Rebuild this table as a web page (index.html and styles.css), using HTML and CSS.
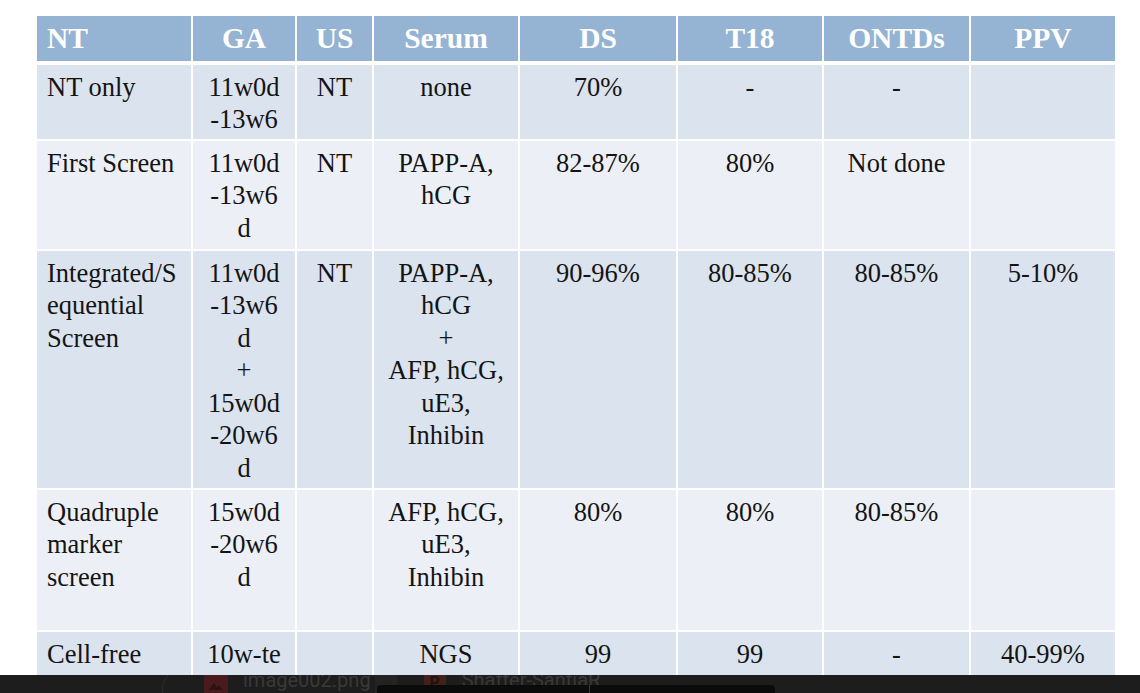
FILE: index.html
```html
<!DOCTYPE html>
<html lang="en">
<head>
<meta charset="utf-8">
<title>Prenatal screening comparison</title>
<link rel="stylesheet" href="styles.css">
</head>
<body>
<div class="page">
  <table class="screen-table">
    <colgroup>
      <col class="c1"><col class="c2"><col class="c3"><col class="c4">
      <col class="c5"><col class="c6"><col class="c7"><col class="c8">
    </colgroup>
    <thead>
      <tr class="head-row">
        <th class="left">NT</th>
        <th>GA</th>
        <th>US</th>
        <th>Serum</th>
        <th>DS</th>
        <th>T18</th>
        <th>ONTDs</th>
        <th>PPV</th>
      </tr>
    </thead>
    <tbody>
      <tr class="row odd r1">
        <td class="left">NT only</td>
        <td>11w0d<br>-13w6</td>
        <td>NT</td>
        <td>none</td>
        <td>70%</td>
        <td>-</td>
        <td>-</td>
        <td></td>
      </tr>
      <tr class="row even r2">
        <td class="left">First Screen</td>
        <td>11w0d<br>-13w6<br>d</td>
        <td>NT</td>
        <td>PAPP-A,<br>hCG</td>
        <td>82-87%</td>
        <td>80%</td>
        <td>Not done</td>
        <td></td>
      </tr>
      <tr class="row odd r3">
        <td class="left">Integrated/S<br>equential<br>Screen</td>
        <td>11w0d<br>-13w6<br>d<br>+<br>15w0d<br>-20w6<br>d</td>
        <td>NT</td>
        <td>PAPP-A,<br>hCG<br>+<br>AFP, hCG,<br>uE3,<br>Inhibin</td>
        <td>90-96%</td>
        <td>80-85%</td>
        <td>80-85%</td>
        <td>5-10%</td>
      </tr>
      <tr class="row even r4">
        <td class="left">Quadruple<br>marker<br>screen</td>
        <td>15w0d<br>-20w6<br>d</td>
        <td></td>
        <td>AFP, hCG,<br>uE3,<br>Inhibin</td>
        <td>80%</td>
        <td>80%</td>
        <td>80-85%</td>
        <td></td>
      </tr>
      <tr class="row odd r5">
        <td class="left">Cell-free</td>
        <td>10w-te</td>
        <td></td>
        <td>NGS</td>
        <td>99</td>
        <td>99</td>
        <td>-</td>
        <td>40-99%</td>
      </tr>
    </tbody>
  </table>
</div>

<div class="download-bar">
  <div class="chip-ring"></div>
  <div class="dl-item">
    <span class="file-icon img-icon">
      <svg width="24" height="18" viewBox="0 0 24 18"><rect x="0" y="0" width="24" height="18" fill="#4a1b1c"/><path d="M5 15 L10 8 L13 12 L15 10 L19 15 Z" fill="#2a1414"/></svg>
    </span>
    <span class="dl-name">image002.png</span>
    <span class="dl-sep"></span>
  </div>
  <div class="dl-item second">
    <span class="file-icon ppt-icon">P</span>
    <span class="dl-name">Shaffer-SantiaR...</span>
  </div>
  <div class="overlay-strip"></div>
  <div class="overlay-line"></div>
</div>
</body>
</html>
```

FILE: styles.css
```css
* {
  box-sizing: border-box;
}

html, body {
  margin: 0;
  padding: 0;
  background: #ffffff;
}

body {
  width: 1140px;
  height: 693px;
  overflow: hidden;
  position: relative;
  font-family: "Liberation Serif", "Times New Roman", serif;
}

.page {
  padding: 14px 0 0 35px;
}

.screen-table {
  table-layout: fixed;
  width: 1082px;
  border-collapse: separate;
  border-spacing: 2px;
  background: #ffffff;
  font-family: "Liberation Serif", "Times New Roman", serif;
}

.c1 { width: 154px; }
.c2 { width: 102px; }
.c3 { width: 75px; }
.c4 { width: 144px; }
.c5 { width: 156px; }
.c6 { width: 144px; }
.c7 { width: 145px; }
.c8 { width: 144px; }

.screen-table th,
.screen-table td {
  padding: 0 4px;
  text-align: center;
  vertical-align: top;
  white-space: nowrap;
  font-family: "Liberation Serif", "Times New Roman", serif;
}

.screen-table .left {
  text-align: left;
  padding-left: 10px;
}

.head-row {
  height: 47px;
}

.head-row th {
  background: #95b3d2;
  background-clip: padding-box;
  border-bottom: 2px solid #ffffff;
  color: #ffffff;
  font-weight: bold;
  font-size: 29.5px;
  line-height: 32.5px;
  padding-top: 6px;
}

.row td {
  font-size: 26.5px;
  line-height: 32.5px;
  color: #141414;
  padding-top: 5.5px;
}

.odd td {
  background: #dbe3ee;
}

.even td {
  background: #ecf0f6;
}

.r1 { height: 74px; }
.r2 { height: 108px; }
.r3 { height: 237px; }
.r4 { height: 140px; }
.r5 { height: 74px; }

/* partially visible download bar at the bottom of the window */
.download-bar {
  position: absolute;
  left: 0;
  right: 0;
  top: 675px;
  height: 18px;
  background: #1d1d1d;
  overflow: hidden;
  display: flex;
  align-items: flex-start;
  font-family: Roboto, "Liberation Sans", sans-serif;
  font-size: 20px;
  line-height: 19px;
  color: #393939;
}

.chip-ring {
  width: 40px;
  height: 40px;
  margin: -6px 0 0 162px;
  border: 1px solid #2c2c2c;
  border-radius: 20px 0 0 20px;
  border-right: none;
}

.dl-item {
  display: flex;
  align-items: flex-start;
  margin-left: 2px;
}

.file-icon {
  display: block;
  width: 24px;
  height: 18px;
}

.dl-name {
  margin: -4px 0 0 15px;
}

.dl-sep {
  width: 22px;
  height: 18px;
  margin-left: 4px;
  background: #232323;
}

.dl-item.second {
  margin-left: 27px;
}

.ppt-icon {
  width: 22px;
  height: 15px;
  background: #43201a;
  color: #25110e;
  font-weight: bold;
  font-size: 16px;
  line-height: 15px;
  text-align: center;
}

.dl-item.second .dl-name {
  margin-left: 16px;
}

.overlay-strip {
  position: absolute;
  left: 377px;
  top: 10px;
  width: 398px;
  height: 14px;
  background: #0b0b0b;
  border-radius: 4px;
}

.overlay-line {
  position: absolute;
  left: 589px;
  top: 10px;
  width: 1px;
  height: 8px;
  background: #3a3a3a;
}
```
